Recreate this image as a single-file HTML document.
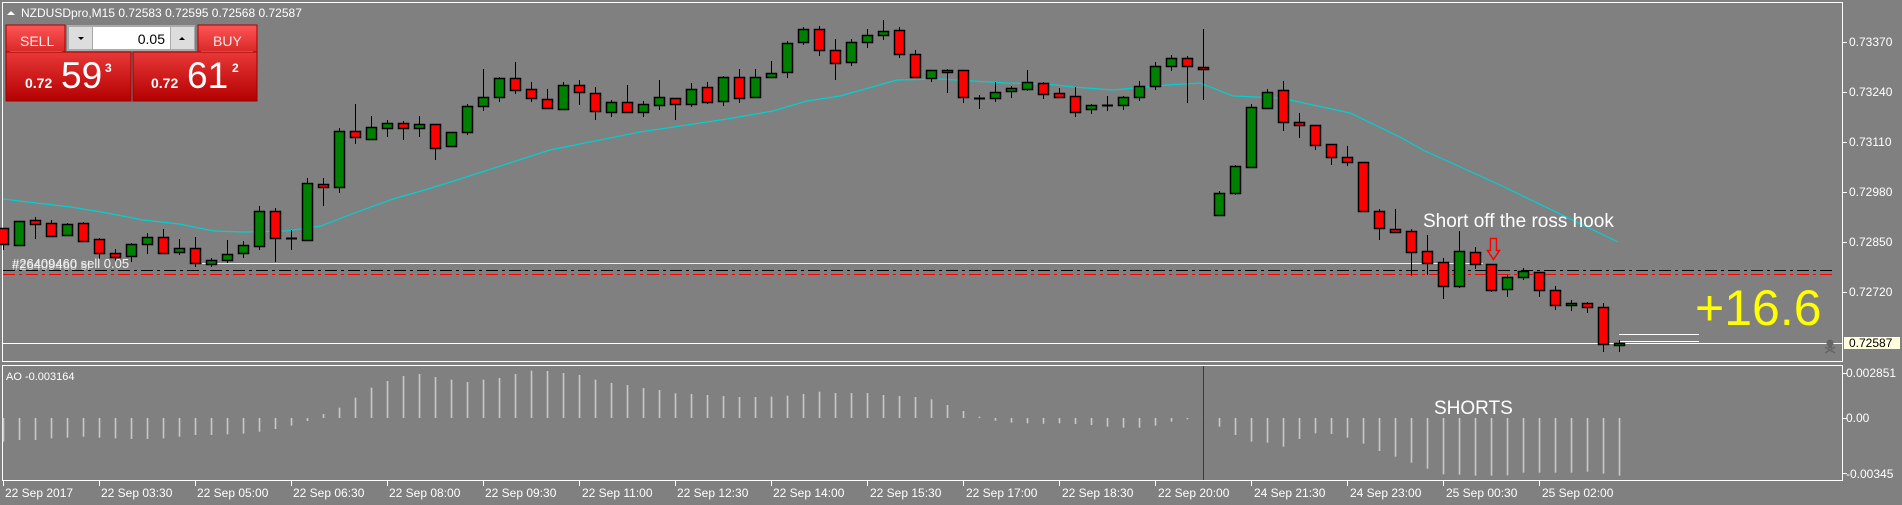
<!DOCTYPE html>
<html><head><meta charset="utf-8"><style>
html,body{margin:0;padding:0;background:#808080;width:1902px;height:505px;overflow:hidden;}
svg{display:block;font-family:"Liberation Sans","DejaVu Sans",sans-serif;}
</style></head><body>
<svg id="s" width="1902" height="505" xmlns="http://www.w3.org/2000/svg">
<rect width="1902" height="505" fill="#808080"/>
<!-- frames -->
<rect x="2.5" y="2.5" width="1840" height="359" fill="none" stroke="#fff" stroke-width="1"/>
<rect x="2.5" y="365.5" width="1840" height="115" fill="none" stroke="#fff" stroke-width="1"/>
<!-- level lines -->
<line x1="3" y1="270.5" x2="1836" y2="270.5" stroke="#000" stroke-dasharray="12,4,3,4"/>
<line x1="3" y1="274.5" x2="1836" y2="274.5" stroke="#f00" stroke-dasharray="12,4,3,4"/>
<line x1="202" y1="263.5" x2="1483" y2="263.5" stroke="#ffff66"/>
<line x1="3" y1="343.5" x2="1843" y2="343.5" stroke="#fff"/>
<line x1="1619" y1="334.5" x2="1699" y2="334.5" stroke="#fff"/>
<line x1="1619" y1="341.5" x2="1699" y2="341.5" stroke="#fff"/>
<!-- MA -->
<polyline fill="none" stroke="#00d0d0" stroke-width="1.2" points="3,199 36,203 71,207 107,213 143,220 179,224 214,231 243,232 286,231 321,226 357,212 393,199 428,189 457,180 550,150 640,132 727,119 773,111 807,101 840,96 890,82 897,80 940,79 973,81 1007,83 1047,84 1073,87 1113,90 1167,85 1200,83 1233,96 1280,98 1327,108 1350,113 1400,137 1423,150 1500,185 1618,242"/>
<g id="cand"></g>
<g id="ao"></g>
<line x1="1203.5" y1="366" x2="1203.5" y2="480" stroke="#c00000"/>
<!-- texts -->
<text x="12" y="268" fill="#fff" font-size="13" opacity="0.9">#26409460 sell 0.05</text>
<text x="12" y="270" fill="#fff" font-size="13" opacity="0.6">#26409460 sl</text>
<text x="1423" y="227" fill="#fff" font-size="19">Short off the ross hook</text>
<path d="M1490.5 238.5 h6 v12 h3 l-6 9 l-6 -9 h3 z" fill="none" stroke="#f00" stroke-width="1.5"/>
<text x="1695" y="325" fill="#ffff00" font-size="50">+16.6</text>
<text x="1434" y="414" fill="#fff" font-size="19">SHORTS</text>
<text x="6" y="380" fill="#fff" font-size="11">AO -0.003164</text>
<!-- skull -->
<g fill="#666"><circle cx="1830" cy="343" r="3.5"/><rect x="1828" y="345" width="4" height="3"/></g>
<path d="M1825 347 l10 6 M1835 347 l-10 6" stroke="#666" stroke-width="1.5"/>
<!-- right axis -->
<g fill="#fff" font-size="12">
<text x="1849" y="46">0.73370</text><text x="1849" y="96">0.73240</text><text x="1849" y="146">0.73110</text>
<text x="1849" y="196">0.72980</text><text x="1849" y="246">0.72850</text><text x="1849" y="296">0.72720</text>
<text x="1846" y="377">0.002851</text><text x="1846" y="422">0.00</text><text x="1846" y="478">-0.00345</text>
</g>
<g stroke="#fff"><line x1="1843" y1="42.5" x2="1847" y2="42.5"/><line x1="1843" y1="92.5" x2="1847" y2="92.5"/><line x1="1843" y1="142.5" x2="1847" y2="142.5"/><line x1="1843" y1="192.5" x2="1847" y2="192.5"/><line x1="1843" y1="242.5" x2="1847" y2="242.5"/><line x1="1843" y1="292.5" x2="1847" y2="292.5"/><line x1="1843" y1="373.5" x2="1847" y2="373.5"/><line x1="1843" y1="418.5" x2="1847" y2="418.5"/><line x1="1843" y1="473.5" x2="1847" y2="473.5"/></g>
<rect x="1844" y="337" width="56" height="12" fill="#ffffe0"/>
<text x="1849" y="347" fill="#000" font-size="12">0.72587</text>
<!-- time axis -->
<g fill="#fff" font-size="12">
<text x="5" y="497">22 Sep 2017</text><text x="101" y="497">22 Sep 03:30</text><text x="197" y="497">22 Sep 05:00</text>
<text x="293" y="497">22 Sep 06:30</text><text x="389" y="497">22 Sep 08:00</text><text x="485" y="497">22 Sep 09:30</text>
<text x="582" y="497">22 Sep 11:00</text><text x="677" y="497">22 Sep 12:30</text><text x="773" y="497">22 Sep 14:00</text>
<text x="870" y="497">22 Sep 15:30</text><text x="966" y="497">22 Sep 17:00</text><text x="1062" y="497">22 Sep 18:30</text>
<text x="1158" y="497">22 Sep 20:00</text><text x="1254" y="497">24 Sep 21:30</text><text x="1350" y="497">24 Sep 23:00</text>
<text x="1446" y="497">25 Sep 00:30</text><text x="1542" y="497">25 Sep 02:00</text>
</g>
<g id="ticks" stroke="#fff"></g>
<!-- header -->
<path d="M7 15 l4 -4 l4 4 z" fill="#fff"/>
<text x="21" y="17" fill="#fff" font-size="12">NZDUSDpro,M15  0.72583 0.72595 0.72568 0.72587</text>
<defs>
<linearGradient id="rg" x1="0" y1="0" x2="0" y2="1"><stop offset="0" stop-color="#e83838"/><stop offset="1" stop-color="#b40000"/></linearGradient>
<linearGradient id="rb" x1="0" y1="0" x2="0" y2="1"><stop offset="0" stop-color="#f55"/><stop offset="1" stop-color="#d82828"/></linearGradient>
</defs>
<rect x="6" y="25" width="59" height="27" fill="url(#rb)" stroke="#a00"/>
<line x1="10" y1="51.5" x2="62" y2="51.5" stroke="#f0a0a0"/>
<text x="20" y="46" fill="#ffe8e8" font-size="14">SELL</text>
<rect x="198" y="25" width="59" height="27" fill="url(#rb)" stroke="#a00"/>
<line x1="201" y1="51.5" x2="253" y2="51.5" stroke="#f0a0a0"/>
<text x="213" y="46" fill="#ffe8e8" font-size="14">BUY</text>
<rect x="67" y="25" width="128" height="26" fill="#aaa"/>
<rect x="69" y="27" width="23" height="22" fill="#ddd"/>
<rect x="93" y="27" width="77" height="22" fill="#fff"/>
<rect x="171" y="27" width="23" height="22" fill="#ddd"/>
<path d="M78 37 h6 l-3 3 z" fill="#000"/><path d="M179 40 h6 l-3 -3 z" fill="#000"/>
<text x="165" y="44" fill="#000" font-size="14" text-anchor="end">0.05</text>
<rect x="6" y="52" width="125" height="49" fill="url(#rg)" stroke="#900"/>
<rect x="133" y="52" width="124" height="49" fill="url(#rg)" stroke="#900"/>
<g fill="#fff">
<text x="25" y="88" font-size="14" font-weight="bold">0.72</text>
<text x="61" y="88" font-size="37">59</text>
<text x="105" y="72" font-size="12" font-weight="bold">3</text>
<text x="151" y="88" font-size="14" font-weight="bold">0.72</text>
<text x="187" y="88" font-size="37">61</text>
<text x="232" y="72" font-size="12" font-weight="bold">2</text>
</g>
</svg>
<script>
var C=[["r",228,244,228,250],["g",221,245,221,245],["r",220,224,217,239],["r",223,236,220,236],["g",224,235,223,236],["r",223,241,222,241],["r",239,253,238,259],["r",253,257,249,262],["g",244,256,243,262],["g",237,244,233,254],["r",237,253,229,253],["g",248,252,239,255],["r",248,263,237,267],["g",260,264,258,267],["g",254,260,240,263],["g",245,253,241,258],["g",211,246,206,250],["r",211,238,208,262],["d",238,238,230,250],["g",183,240,178,240],["r",184,187,178,206],["g",131,187,128,193],["r",131,137,104,144],["g",127,139,116,140],["g",123,128,120,137],["r",123,128,121,140],["g",124,128,116,137],["r",124,148,124,160],["g",132,146,132,146],["g",106,132,104,135],["g",97,106,69,111],["g",78,97,77,102],["r",78,90,62,94],["r",89,98,82,102],["r",99,108,89,109],["g",85,109,82,109],["r",85,92,80,105],["r",93,111,87,120],["g",102,112,100,117],["r",102,112,85,112],["g",104,112,101,117],["g",97,105,80,110],["r",98,104,98,120],["g",89,104,83,107],["r",87,102,82,104],["g",77,101,76,106],["r",77,98,69,103],["g",77,97,69,97],["g",73,77,61,78],["g",43,72,41,78],["g",29,42,27,45],["r",29,50,26,56],["r",50,63,39,80],["g",42,62,39,66],["g",35,42,29,48],["g",31,35,20,40],["r",30,54,27,58],["r",54,77,50,78],["g",70,78,70,82],["g",70,72,69,93],["r",70,97,70,103],["d",98,98,95,109],["g",92,98,82,102],["g",88,91,86,98],["g",82,89,70,91],["r",83,94,82,99],["r",93,97,88,98],["r",96,112,87,117],["g",105,109,104,114],["d",105,105,96,111],["g",97,105,96,110],["g",86,97,81,101],["g",66,86,62,90],["g",58,66,55,71],["r",58,66,56,103],["r",67,69,29,100],["g",193,215,191,215],["g",166,193,165,195],["g",107,167,104,168],["g",92,108,89,108],["r",90,122,81,131],["r",122,125,113,138],["r",125,145,125,150],["r",144,157,144,165],["r",157,162,146,166],["r",162,211,162,211],["r",211,228,209,240],["r",229,232,209,233],["r",231,252,229,276],["r",251,263,235,275],["r",262,286,258,299],["g",251,286,231,288],["r",252,264,247,269],["r",264,290,264,292],["g",277,289,275,297],["g",271,277,268,280],["r",272,290,272,297],["r",290,305,286,310],["g",303,305,300,311],["r",303,307,302,313],["r",307,344,303,352],["g",343,345,340,352]];
var A=[260,255,255,250,248,245,248,250,252,252,250,245,240,240,238,236,230,222,212,198,177,158,128,98,78,63,57,66,74,81,74,69,57,47,48,54,60,74,84,90,99,105,115,117,120,123,126,126,125,122,117,110,114,114,114,120,123,126,133,150,168,185,197,203,205,206,205,207,210,215,218,218,212,200,193,188,215,240,260,263,275,252,235,237,248,266,288,305,323,341,358,359,362,362,361,353,353,353,353,350,356,362];
var h="";
C.forEach(function(c,k){var x=3+16*k;
h+='<line x1="'+(x+.5)+'" y1="'+c[3]+'" x2="'+(x+.5)+'" y2="'+c[4]+'" stroke="#000"/>';
if(c[0]=="d"){h+='<line x1="'+(x-5)+'" y1="'+(c[1]+.5)+'" x2="'+(x+6)+'" y2="'+(c[1]+.5)+'" stroke="#000" stroke-width="2"/>';}
else{var hh=Math.max(c[2]-c[1],2);h+='<rect x="'+(x-4.5)+'" y="'+(c[1]+.5)+'" width="10" height="'+hh+'" fill="'+(c[0]=="g"?"#008000":"#ff0000")+'" stroke="#000" stroke-width="1.5"/>';}
});
document.getElementById("cand").innerHTML=h;
var a="";var z=418;
A.forEach(function(v,k){var x=3+16*k;var y=355+v/3;a+='<line x1="'+(x+.5)+'" y1="'+z+'" x2="'+(x+.5)+'" y2="'+y.toFixed(1)+'" stroke="#c8c8c8" stroke-width="1.6"/>';});
document.getElementById("ao").innerHTML=a;
var t="";for(var i=0;i<17;i++){var x=3+96*i+.5;t+='<line x1="'+x+'" y1="481" x2="'+x+'" y2="486"/>';}
document.getElementById("ticks").innerHTML=t;
</script>
</body></html>
